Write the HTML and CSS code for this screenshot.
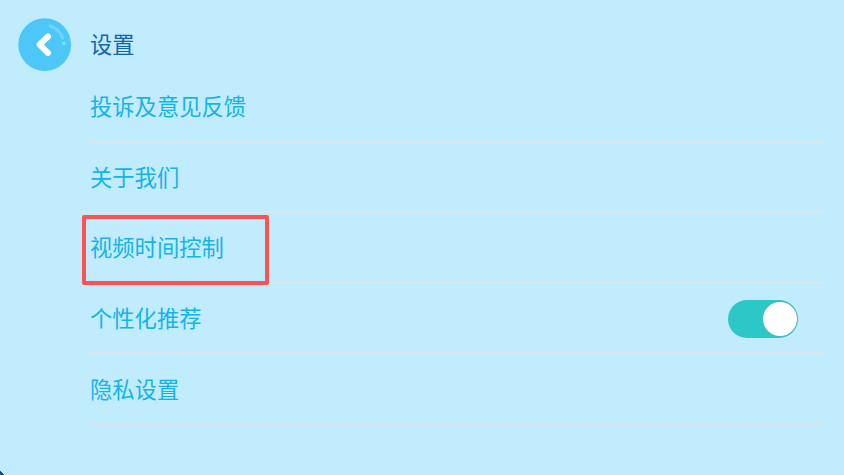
FILE: index.html
```html
<!DOCTYPE html>

<html>

<head>

    <meta charset="UTF-8">
    <title>设置</title>

    <link rel="stylesheet" href="styles.css">

</head>

<body>

<div class="page">

    <div class="header">
        <div class="btn-back">
            <svg viewBox="0 0 54 54" width="54" height="54">
                <circle cx="26.7" cy="26.7" r="26.4" fill="#4cc7f8"/>
                <path d="M32 8 A19.3 19.3 0 0 1 44.7 20.3" fill="none" stroke="#74d4f9" stroke-width="3" stroke-linecap="round"/>
                <circle cx="46" cy="25.3" r="1.7" fill="#8adcfb"/>
                <path d="M30 18.5 L21.6 26.7 L30 35" fill="none" stroke="#ffffff" stroke-width="6" stroke-linecap="round" stroke-linejoin="round"/>
            </svg>
        </div>
        <div class="title">设置</div>
    </div>

    <div class="list">
        <div class="row"><span class="label">投诉及意见反馈</span></div>
        <div class="row"><span class="label">关于我们</span></div>
        <div class="row">
            <span class="label">视频时间控制</span>
            <div class="highlight"></div>
        </div>
        <div class="row">
            <span class="label">个性化推荐</span>
            <div class="toggle"><div class="knob"></div></div>
        </div>
        <div class="row"><span class="label">隐私设置</span></div>
    </div>

    <div class="corner"></div>

</div>

</body>
</html>
```

FILE: styles.css
```css
html, body {
    margin: 0;
    padding: 0;
    height: 100%;
    overflow: hidden;
    background: #c1ecfe;
}

.page {
    position: relative;
    height: 475px;
    font-family: "Noto Sans CJK SC", "Liberation Sans", sans-serif;
    font-size: 22.3px;
    color: #14b3ea;
}

.header {
    display: flex;
    align-items: center;
    height: 54px;
    padding: 18px 0 0 18px;
}

.btn-back {
    width: 54px;
    height: 54px;
}

.title {
    margin-left: 18px;
    margin-bottom: 4px;
    color: #1464b0;
}

.list {
    margin-left: 90px;
    margin-right: 20px;
}

.row {
    position: relative;
    display: flex;
    align-items: center;
    justify-content: space-between;
    box-sizing: border-box;
    height: 70.6px;
    border-bottom: 2px solid #dce4ec;
}

.label {
    margin-bottom: 2px;
}

.highlight {
    position: absolute;
    left: -8px;
    top: 2px;
    box-sizing: border-box;
    width: 187px;
    height: 70px;
    border: 4px solid #fb5355;
    border-radius: 2px;
}

.toggle {
    position: relative;
    width: 70px;
    height: 38px;
    margin-top: 1px;
    margin-right: 26px;
    border-radius: 19px;
    background: #2cc8c8;
}

.knob {
    position: absolute;
    right: 1px;
    top: 2px;
    width: 34px;
    height: 34px;
    border-radius: 50%;
    background: #ffffff;
    box-shadow: 0 0 2px #8a9a9a;
}

.corner {
    position: absolute;
    left: 0;
    bottom: 0;
    width: 4px;
    height: 4px;
    background: linear-gradient(to top right, #0a4f8f 50%, transparent 50%);
}
```
